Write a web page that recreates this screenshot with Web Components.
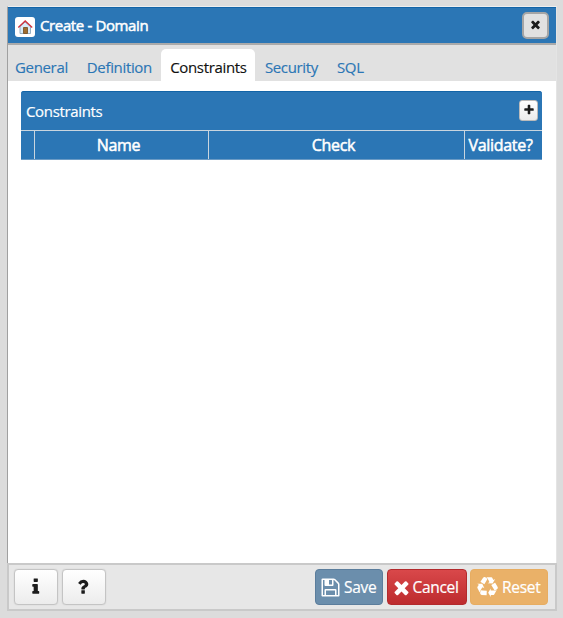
<!DOCTYPE html>
<html lang="en">
<head>
<meta charset="utf-8">
<title>Create - Domain</title>
<style>
html,body{margin:0;height:100%;background:#dcdcdc;overflow:hidden}
body{font:15px/20px "Open Sans",sans-serif;letter-spacing:-.34px;color:#222;box-sizing:border-box;padding:6px 6px 7px 7px}
</style>
</head>
<body>
<domain-dialog></domain-dialog>
<script>
const paths = {
save:"M512 1536h768v-384h-768v384zm896 0h128v-896q0-14-10-38.5t-20-34.5l-281-281q-10-10-34-20t-39-10v416q0 40-28 68t-68 28h-576q-40 0-68-28t-28-68v-416h-128v1280h128v-416q0-40 28-68t68-28h832q40 0 68 28t28 68v416zm-384-928v-320q0-13-9.5-22.5t-22.5-9.5h-192q-13 0-22.5 9.5t-9.5 22.5v320q0 13 9.5 22.5t22.5 9.5h192q13 0 22.5-9.5t9.5-22.5zm640 32v928q0 40-28 68t-68 28h-1344q-40 0-68-28t-28-68v-1344q0-40 28-68t68-28h928q40 0 88 20t76 48l280 280q28 28 48 76t20 88z",
times:"M1490 1322q0 40-28 68l-136 136q-28 28-68 28t-68-28l-294-294-294 294q-28 28-68 28t-68-28l-136-136q-28-28-28-68t28-68l294-294-294-294q-28-28-28-68t28-68l136-136q28-28 68-28t68 28l294 294 294-294q28-28 68-28t68 28l136 136q28 28 28 68t-28 68l-294 294 294 294q28 28 28 68z",
plus:"M1600 736v192q0 40-28 68t-68 28h-416v416q0 40-28 68t-68 28h-192q-40 0-68-28t-28-68v-416h-416q-40 0-68-28t-28-68v-192q0-40 28-68t68-28h416v-416q0-40 28-68t68-28h192q40 0 68 28t28 68v416h416q40 0 68 28t28 68z",
info:"M1216 1344v128q0 26-19 45t-45 19h-512q-26 0-45-19t-19-45v-128q0-26 19-45t45-19h64v-384h-64q-26 0-45-19t-19-45v-128q0-26 19-45t45-19h384q26 0 45 19t19 45v576h64q26 0 45 19t19 45zm-128-1152v192q0 26-19 45t-45 19h-256q-26 0-45-19t-19-45v-192q0-26 19-45t45-19h256q26 0 45 19t19 45z",
question:"M1088 1256v240q0 16-12 28t-28 12h-240q-16 0-28-12t-12-28v-240q0-16 12-28t28-12h240q16 0 28 12t12 28zm316-600q0 54-15.5 101t-35 76.5-55 59.5-57.5 43.5-61 35.5q-41 23-68.500 65t-27.500 67q0 17-12 32.500t-28 15.500h-240q-15 0-25.500-18.500t-10.500-37.500v-45q0-83 65-156.500t143-108.500q59-27 84-56t25-76q0-42-46.500-74t-107.500-32q-65 0-108 29-35 25-107 115-13 16-31 16-12 0-25-8l-164-125q-13-10-15.500-25t5.500-28q160-266 464-266 80 0 161 31t146 83 106 127.500 41 158.500z",
recycle:"M836 1169l-15 368-2 22-420-29q-36-3-67-31.500t-47-65.500q-11-27-14.500-55t4-65 12-55 21.500-64 19-53q78 12 509 28zm-387-586l180 379-147-92q-63 72-111.500 144.500t-72.500 125-39.500 94.500-18.500 63l-4 21-190-357q-17-26-18-56t6-47l8-18q35-63 114-188l-140-86zm1231 517l-188 359q-12 29-36.500 46.500t-43.500 20.500l-18 4q-71 7-219 12l8 164-230-367 211-362 7 173q170 16 283 5t170-33zm-785-924q-47 63-265 435l-317-187-19-12 225-356q20-31 60-45t80-10q24 2 48.500 12t42 21 41.500 33 36 34.500 36 39.500 32 35zm655 307l212 363q18 37 12.500 76t-27.500 74q-13 20-33 37t-38 28-48.500 22-47 16-51.500 14-46 12q-34-72-265-436l313-195zm-143-226l142-83-220 373-419-20 151-86q-34-89-75-166t-75.500-123.500-64.500-80-47-46.500l-17-13 405 1q31-3 58 10.500t39 28.500l11 15q39 61 112 190z"
};
const define = (name, html) => customElements.define(name, class extends HTMLElement {
  connectedCallback() {
    if (this.shadowRoot) return;
    this.attachShadow({mode:"open"}).innerHTML = typeof html === "function" ? html(this) : html;
  }
});

define("glyph-icon", el => `<style>:host{display:block;flex:none;width:var(--size,16px);height:var(--size,16px)}svg{display:block;width:100%;height:100%;fill:currentColor;overflow:visible}</style>
<svg viewBox="0 0 1792 1792"><path d="${paths[el.getAttribute("name")]}"/></svg>`);

define("house-icon", `<style>:host{display:block;flex:none;width:20px;height:20px;border-radius:3px;background:#fff}svg{display:block}</style>
<svg width="20" height="20" viewBox="0 0 20 20">
<path d="M5 9.500 10 5l5.500 4.500V16.500H5z" fill="#d9ebf8" stroke="#8fa9bd" stroke-width=".9"/>
<path d="M8.500 10.500h4v6h-4z" fill="#9f6c2d" stroke="#7a5529" stroke-width=".9"/>
<path d="M3.300 10.500 10.200 4l7 6.500" fill="none" stroke="#d0313c" stroke-width="1.300"/>
</svg>`);

define("push-button", `<style>
:host{display:flex;box-sizing:border-box;flex:none;align-items:center;justify-content:center;border:1px solid #c9c9c9;border-radius:4px;color:#1c1c1c;background:linear-gradient(#fff,#ececec);font-size:15.500px;letter-spacing:-.3px;white-space:nowrap}
:host([kind=tool]){width:44px;height:36px;border-color:#c4c4c4;--size:19.500px;padding-right:1px;box-shadow:0 0 1px #bbb}
:host([kind=close]){width:27px;height:27px;border:2px solid #a5a5a5;border-radius:5px;background:#e1e1e1;padding-bottom:1px;--size:13px}
:host([kind=add]){width:19px;height:21px;border-color:#bbb;border-radius:3px;padding-bottom:1px;--size:12px}
:host([kind=save]),:host([kind=cancel]),:host([kind=reset]){height:36px;color:#fff;-webkit-text-stroke:.2px #fff;justify-content:flex-start;padding-left:4px;gap:3px;--size:21px}
:host([kind=save]){width:68px;background:#6b8eac;border-color:#5b7d9c}
:host([kind=cancel]){width:80px;background:linear-gradient(#d9484a,#bd2b2e);border-color:#b22a2d;padding-left:3px;gap:1px}
:host([kind=reset]){width:78px;background:#eab168;border-color:#e7ad62;padding-left:6px;gap:4px}
</style><slot></slot>`);

define("title-bar", `<style>
:host{display:flex;box-sizing:border-box;height:38px;align-items:center;padding:0 7px;background:#2b76b5;border-top:1px solid #1264a7;border-bottom:2px solid #aaa;color:#fff}
house-icon{margin-top:2px}
push-button{margin-bottom:1px}
b{font-size:15px;font-weight:400;-webkit-text-stroke:.5px #fff;letter-spacing:-.37px;margin:-2px 0 0 5px;flex:1}
</style><house-icon></house-icon><b><slot></slot></b><push-button kind="close"><glyph-icon name="times"></glyph-icon></push-button>`);

define("tab-item", `<style>
:host{display:flex;box-sizing:border-box;height:32px;padding:8px 9.500px 0;color:#2b76b5;white-space:nowrap;border-radius:5px 5px 0 0;-webkit-text-stroke:.15px}
:host([active]){color:#111;background:#fff;padding:8px 8.800px 0}
</style><slot></slot>`);

define("tab-strip", `<style>
:host{display:flex;box-sizing:border-box;height:36px;align-items:flex-end;background:#e1e1e1}
</style><slot></slot>`);

define("constraint-grid", `<style>
:host{display:block;margin:10px 14px 0 13px;background:#2b76b5;color:#fff;border-radius:3px 3px 0 0}
.bar{box-sizing:border-box;height:39px;border-top:1px solid #1264a7;border-radius:3px 3px 0 0;display:flex;align-items:center;padding:0 4px 0 5px;justify-content:space-between;-webkit-text-stroke:.2px #fff}
.bar push-button{margin-bottom:1px}
.head{display:grid;grid-template-columns:13px 174px 256px 1fr;height:28px;border-top:1px solid #c9d5df;border-bottom:1px solid #6b9bc5}
.head span{font-size:16px;letter-spacing:-.3px;-webkit-text-stroke:.5px #fff;text-align:center;line-height:29px;border-left:1px solid #c9d5df;box-sizing:border-box;padding-right:6px;height:28px}
.head span:first-child{border:0}
</style><div class="bar"><span>Constraints</span><push-button kind="add"><glyph-icon name="plus"></glyph-icon></push-button></div>
<div class="head"><span></span><span>Name</span><span>Check</span><span>Validate?</span></div>`);

define("dialog-footer", `<style>
:host{display:flex;box-sizing:border-box;height:48px;align-items:center;gap:3.500px;padding:0 7px 0 5px;background:#e7e7e7;border:2px solid #c9c9c9}
i{flex:1}
</style><push-button kind="tool"><glyph-icon name="info"></glyph-icon></push-button><push-button kind="tool"><glyph-icon name="question"></glyph-icon></push-button><i></i>
<push-button kind="save"><glyph-icon name="save"></glyph-icon><span>Save</span></push-button>
<push-button kind="cancel"><glyph-icon name="times"></glyph-icon><span>Cancel</span></push-button>
<push-button kind="reset"><glyph-icon name="recycle"></glyph-icon><span>Reset</span></push-button>`);

define("domain-dialog", `<style>
:host{display:flex;flex-direction:column;height:605px}
.frame{flex:1;display:flex;flex-direction:column;background:#fff;border-left:1px solid #a0a0a0;border-top:1px solid #eee;border-right:1px solid #e4e4e4;box-sizing:border-box}
tab-item:first-child{padding-left:7px}
</style><div class="frame"><title-bar>Create - Domain</title-bar>
<tab-strip><tab-item>General</tab-item><tab-item>Definition</tab-item><tab-item active>Constraints</tab-item><tab-item>Security</tab-item><tab-item>SQL</tab-item></tab-strip>
<constraint-grid></constraint-grid></div><dialog-footer></dialog-footer>`);
</script>
</body>
</html>
